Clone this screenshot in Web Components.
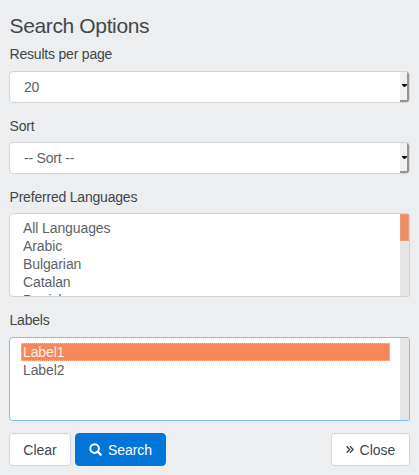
<!DOCTYPE html>
<html lang="en">
<head>
<meta charset="utf-8">
<title>Search Options</title>
<style>
html, body { margin: 0; height: 100%; }
body { background: #eceeef; font-family: "Liberation Sans", Arial, sans-serif; overflow: hidden; }
</style>
</head>
<body>
<search-options>
  <form-field label="Results per page"><select-box>20</select-box></form-field>
  <form-field label="Sort"><select-box>-- Sort --</select-box></form-field>
  <form-field label="Preferred Languages">
    <list-box thumb>
      <list-option>All Languages</list-option>
      <list-option>Arabic</list-option>
      <list-option>Bulgarian</list-option>
      <list-option>Catalan</list-option>
      <list-option>Danish</list-option>
    </list-box>
  </form-field>
  <form-field label="Labels">
    <list-box focused>
      <list-option selected>Label1</list-option>
      <list-option>Label2</list-option>
    </list-box>
  </form-field>
  <action-button slot="actions" style="width:62px">Clear</action-button>
  <action-button slot="actions" primary style="width:91px">
    <svg slot="icon" width="13" height="13" viewBox="0 0 13 13" fill="none" stroke="currentColor"><circle cx="5.6" cy="5.6" r="4.3" stroke-width="2"/><path d="M8.8 8.8L11.7 11.7" stroke-width="2.3" stroke-linecap="round"/></svg>Search</action-button>
  <action-button slot="actions" end style="width:79px">
    <svg slot="icon" width="8" height="9" viewBox="0 0 8 9" fill="none" stroke="currentColor" stroke-width="1.4"><path d="M.6 1.2L3.7 4.5L.6 7.8M4 1.2L7.1 4.5L4 7.8"/></svg>Close</action-button>
</search-options>
<script>
function define(name, html) {
  const template = document.createElement('template');
  template.innerHTML = html;
  customElements.define(name, class extends HTMLElement {
    constructor() {
      super();
      this.attachShadow({ mode: 'open' }).append(template.content.cloneNode(true));
    }
    connectedCallback() {
      const label = this.shadowRoot.querySelector('label');
      if (label) label.textContent = this.getAttribute('label');
    }
  });
}

define('search-options', `
<style>
:host { display: block; box-sizing: border-box; padding: 13px 9px 0; color: #42474b; }
h4 { margin: 0; padding-left: .5px; font-size: 21px; line-height: 25px; height: 32px; font-weight: 400; letter-spacing: -.36px; }
.fields { display: grid; grid-template-rows: 71.5px 71px 123.5px 122px; }
.actions { display: flex; gap: 4px; }
</style>
<h4>Search Options</h4>
<div class="fields"><slot></slot></div>
<div class="actions"><slot name="actions"></slot></div>`);

define('form-field', `
<style>
:host { display: flex; flex-direction: column; }
label { height: 25.5px; padding-left: .5px; line-height: 18px; font-size: 14px; letter-spacing: -.2px; white-space: nowrap; }
</style>
<label></label><slot></slot>`);

define('select-box', `
<style>
:host { display: flex; box-sizing: border-box; height: 32px; border: 1px solid #d2d4d5; border-radius: 4px; background: #fff; color: #5c6368; overflow: hidden; }
.value { flex: 1; padding-left: 14px; font-size: 14px; line-height: 30px; letter-spacing: -.2px; }
.arrow { box-sizing: border-box; width: 9px; border-right: 2px solid #979390; border-bottom: 2px solid #979390; background: #f0f0ee; display: flex; align-items: center; justify-content: flex-end; }
</style>
<span class="value"><slot></slot></span>
<span class="arrow"><svg width="5" height="3" viewBox="0 0 5 3"><path d="M0 0H5V1L3 3H2L0 1Z" fill="#111"/></svg></span>`);

define('list-box', `
<style>
:host { display: flex; box-sizing: border-box; height: 84px; border: 1px solid #d2d4d5; border-radius: 4px 3px 2px 4px; background: #fff; color: #5c6368; overflow: hidden; }
:host([focused]) { border-color: #83bde9; }
.options { flex: 1; padding: 5px 10px 0 11px; }
.track { width: 9px; background: #e5e5e5; }
.thumb { display: none; box-sizing: border-box; height: 27px; background: #ef8e66; border: 1px solid #e99c7d; }
:host([thumb]) .thumb { display: block; }
</style>
<div class="options"><slot></slot></div>
<div class="track"><div class="thumb"></div></div>`);

define('list-option', `
<style>
:host { display: block; box-sizing: border-box; height: 18px; padding-left: 2px; font-size: 14px; line-height: 18px; letter-spacing: -.1px; white-space: nowrap; }
:host([selected]) { background: #f5875b; color: #fff0e6; outline: 1px dotted #f8c2a9; outline-offset: -1px; }
</style>
<slot></slot>`);

define('action-button', `
<style>
:host { display: flex; align-items: center; justify-content: center; box-sizing: border-box; height: 33px; border: 1px solid #d2d4d5; border-radius: 4px; background: #fff; color: #42474b; font-size: 14px; gap: 6px; }
:host([primary]) { background: #0275d8; border-color: #0275d8; color: #fff; letter-spacing: -.1px; }
:host([end]) { margin-left: auto; }
</style>
<slot name="icon"></slot><span><slot></slot></span>`);
</script>
</body>
</html>
